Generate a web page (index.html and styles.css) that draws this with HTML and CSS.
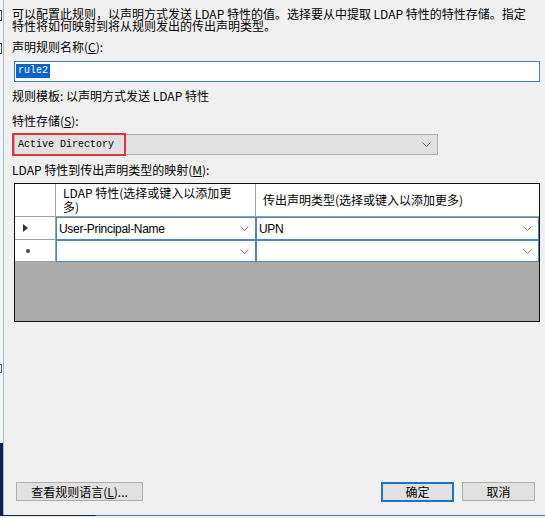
FILE: index.html
```html
<!DOCTYPE html>
<html lang="zh-CN">
<head>
<meta charset="utf-8">
<title>编辑规则</title>
<link rel="stylesheet" href="styles.css">
</head>
<body>
<div class="screen">
  <div class="behind">
    <span class="frag frag-a"></span>
    <span class="frag frag-b"></span>
    <span class="frag frag-c"></span>
    <div class="taskbar"></div>
  </div>
  <div class="dialog">
    <p class="desc">可以配置此规则，以声明方式发送 LDAP 特性的值。选择要从中提取 LDAP 特性的特性存储。指定<br>特性将如何映射到将从规则发出的传出声明类型。</p>

    <label class="lbl lbl-name">声明规则名称(<u>C</u>):</label>
    <div class="textbox"><span class="sel">rule2</span></div>

    <div class="lbl lbl-tpl">规则模板: 以声明方式发送 LDAP 特性</div>

    <label class="lbl lbl-store">特性存储(<u>S</u>):</label>
    <div class="combo-wrap">
      <div class="combo">
        <span class="combo-text">Active Directory</span>
        <svg class="chev" width="9" height="5" viewBox="0 0 9 5"><path d="M0.5 0.5 L4.5 4.5 L8.5 0.5" fill="none" stroke="#606060" stroke-width="1"/></svg>
      </div>
      <div class="mark"></div>
    </div>

    <label class="lbl lbl-map">LDAP 特性到传出声明类型的映射(<u>M</u>):</label>
    <div class="grid">
      <div class="row head">
        <div class="rh"></div>
        <div class="hc c1">LDAP 特性(选择或键入以添加更<br>多)</div>
        <div class="hc c2">传出声明类型(选择或键入以添加更多)</div>
      </div>
      <div class="row">
        <div class="rh"><span class="tri"></span></div>
        <div class="cell c1"><span>User-Principal-Name</span>
          <svg class="chev" width="9" height="5" viewBox="0 0 9 5"><path d="M0.5 0.5 L4.5 4.5 L8.5 0.5" fill="none" stroke="#7a7a7a" stroke-width="1"/></svg></div>
        <div class="cell c2"><span>UPN</span>
          <svg class="chev" width="9" height="5" viewBox="0 0 9 5"><path d="M0.5 0.5 L4.5 4.5 L8.5 0.5" fill="none" stroke="#7a7a7a" stroke-width="1"/></svg></div>
      </div>
      <div class="row">
        <div class="rh"><span class="star"></span></div>
        <div class="cell c1"><span></span>
          <svg class="chev" width="9" height="5" viewBox="0 0 9 5"><path d="M0.5 0.5 L4.5 4.5 L8.5 0.5" fill="none" stroke="#7a7a7a" stroke-width="1"/></svg></div>
        <div class="cell c2"><span></span>
          <svg class="chev" width="9" height="5" viewBox="0 0 9 5"><path d="M0.5 0.5 L4.5 4.5 L8.5 0.5" fill="none" stroke="#7a7a7a" stroke-width="1"/></svg></div>
      </div>
    </div>

    <div class="footer">
      <button class="btn btn-lang">查看规则语言(<u>L</u>)...</button>
      <div class="spacer"></div>
      <button class="btn btn-ok">确定</button>
      <button class="btn btn-cancel">取消</button>
    </div>
  </div>
</div>
<div class="edge"></div>
</body>
</html>
```

FILE: styles.css
```css
html, body {
  margin: 0;
  padding: 0;
}

body {
  width: 545px;
  height: 518px;
  overflow: hidden;
  background: #f0f0f0;
  font-family: "Noto Sans CJK SC", "Liberation Sans", sans-serif;
  font-size: 12px;
  color: #000;
}

u {
  text-decoration: underline;
  text-underline-offset: 1px;
}

.screen {
  display: flex;
  height: 515px;
}

/* sliver of the window underneath */
.behind {
  position: relative;
  width: 3px;
  flex: none;
  overflow: hidden;
  background: #f4f6f8;
  border-right: 1px solid #a9bdd2;
}

/* clipped strokes of the underlying window's labels */
.frag {
  position: absolute;
  left: 0;
  width: 2px;
  border-top: 1px solid #333;
  border-bottom: 1px solid #333;
  border-right: 1px solid #555;
  box-sizing: border-box;
}

.frag-a { top: 10px; height: 11px; }
.frag-b { top: 43px; height: 11px; }
.frag-c { top: 364px; height: 9px; border-color: #667; }

.taskbar {
  position: absolute;
  left: 0;
  right: 0;
  top: 443px;
  bottom: 0;
  background: #0c2150;
}

.dialog {
  flex: 1;
  display: flex;
  flex-direction: column;
  padding: 0 5px 13px 8px;
  min-width: 0;
}

.desc {
  margin: 8px 0 0;
  line-height: 12px;
  white-space: nowrap;
}

.lbl {
  display: block;
  line-height: 14px;
}

.lbl-name { margin-top: 8px; }
.lbl-tpl { margin-top: 7px; }
.lbl-store { margin-top: 11px; }
.lbl-map { margin-top: 8px; }

.textbox {
  margin: 7px 0 0 2px;
  height: 21px;
  box-sizing: border-box;
  background: #fff;
  border: 1px solid #3d7eb6;
  padding: 2px 0 0 1px;
  font-family: "Liberation Mono", monospace;
  font-size: 10px;
  line-height: 14px;
}

.sel {
  display: inline-block;
  background: #0a64c8;
  color: #fff;
  padding: 0 2px;
}

.combo-wrap {
  position: relative;
  margin: 6px 0 0 2px;
  width: 424px;
}

.combo {
  height: 21px;
  box-sizing: border-box;
  background: #e1e1e1;
  border: 1px solid #adadad;
  display: flex;
  align-items: center;
  padding: 0 6px 0 3px;
  font-family: "Liberation Mono", monospace;
  font-size: 10px;
}

.combo-text {
  flex: 1;
}

/* red highlight frame drawn over the store combo */
.mark {
  position: absolute;
  left: -2px;
  top: -1px;
  width: 114px;
  height: 23px;
  box-sizing: border-box;
  border: 2px solid #e0353c;
}

.grid {
  margin: 6px 0 0 2px;
  height: 139px;
  box-sizing: border-box;
  border: 1px solid #111;
  background: #ababab;
  display: flex;
  flex-direction: column;
}

.row {
  display: flex;
  height: 23px;
}

.row.head {
  height: 33px;
  background: #fff;
}

.rh {
  width: 41px;
  flex: none;
  box-sizing: border-box;
  background: #fff;
  border-right: 1px solid #a0a0a0;
  border-bottom: 1px solid #a0a0a0;
  position: relative;
}

.hc {
  box-sizing: border-box;
  border-right: 1px solid #a0a0a0;
  border-bottom: 1px solid #a0a0a0;
  white-space: nowrap;
  line-height: 14px;
  display: flex;
  align-items: center;
  padding-left: 7px;
}

.c1 { width: 200px; flex: none; }
.c2 { flex: 1; }

.hc.c2 { border-right: none; }

.cell {
  box-sizing: border-box;
  background: #fff;
  border: 1px solid #4f86bb;
  display: flex;
  align-items: center;
  padding: 0 6px 0 2px;
  font-family: "Liberation Sans", sans-serif;
  letter-spacing: -0.3px;
}

.cell span {
  flex: 1;
}

.row:nth-child(3) .rh,
.row:nth-child(3) .cell { height: 22px; }

.tri {
  position: absolute;
  left: 8px;
  top: 7px;
  border-left: 5px solid #333;
  border-top: 4px solid transparent;
  border-bottom: 4px solid transparent;
}

.star {
  position: absolute;
  left: 11px;
  top: 9px;
  width: 4px;
  height: 4px;
  border-radius: 50%;
  background: #444;
}

.footer {
  margin-top: auto;
  display: flex;
  align-items: flex-start;
  padding-left: 4px;
}

.spacer { flex: 1; }

.btn {
  font-family: "Noto Sans CJK SC", sans-serif;
  font-size: 12px;
  line-height: 14px;
  color: #000;
  background: #e1e1e1;
  border: 1px solid #adadad;
  height: 19px;
  padding: 0;
  margin: 0;
  box-sizing: border-box;
}

.btn-lang { width: 127px; }

.btn-ok {
  width: 73px;
  height: 20px;
  border: 2px solid #1f74c9;
}

.btn-cancel {
  width: 73px;
  margin-left: 8px;
  margin-right: 5px;
}

.edge {
  height: 1px;
  background: linear-gradient(to right, #0c2150 0, #0c2150 95px, #3a7bc0 96px, #3a7bc0 100%);
}
```
